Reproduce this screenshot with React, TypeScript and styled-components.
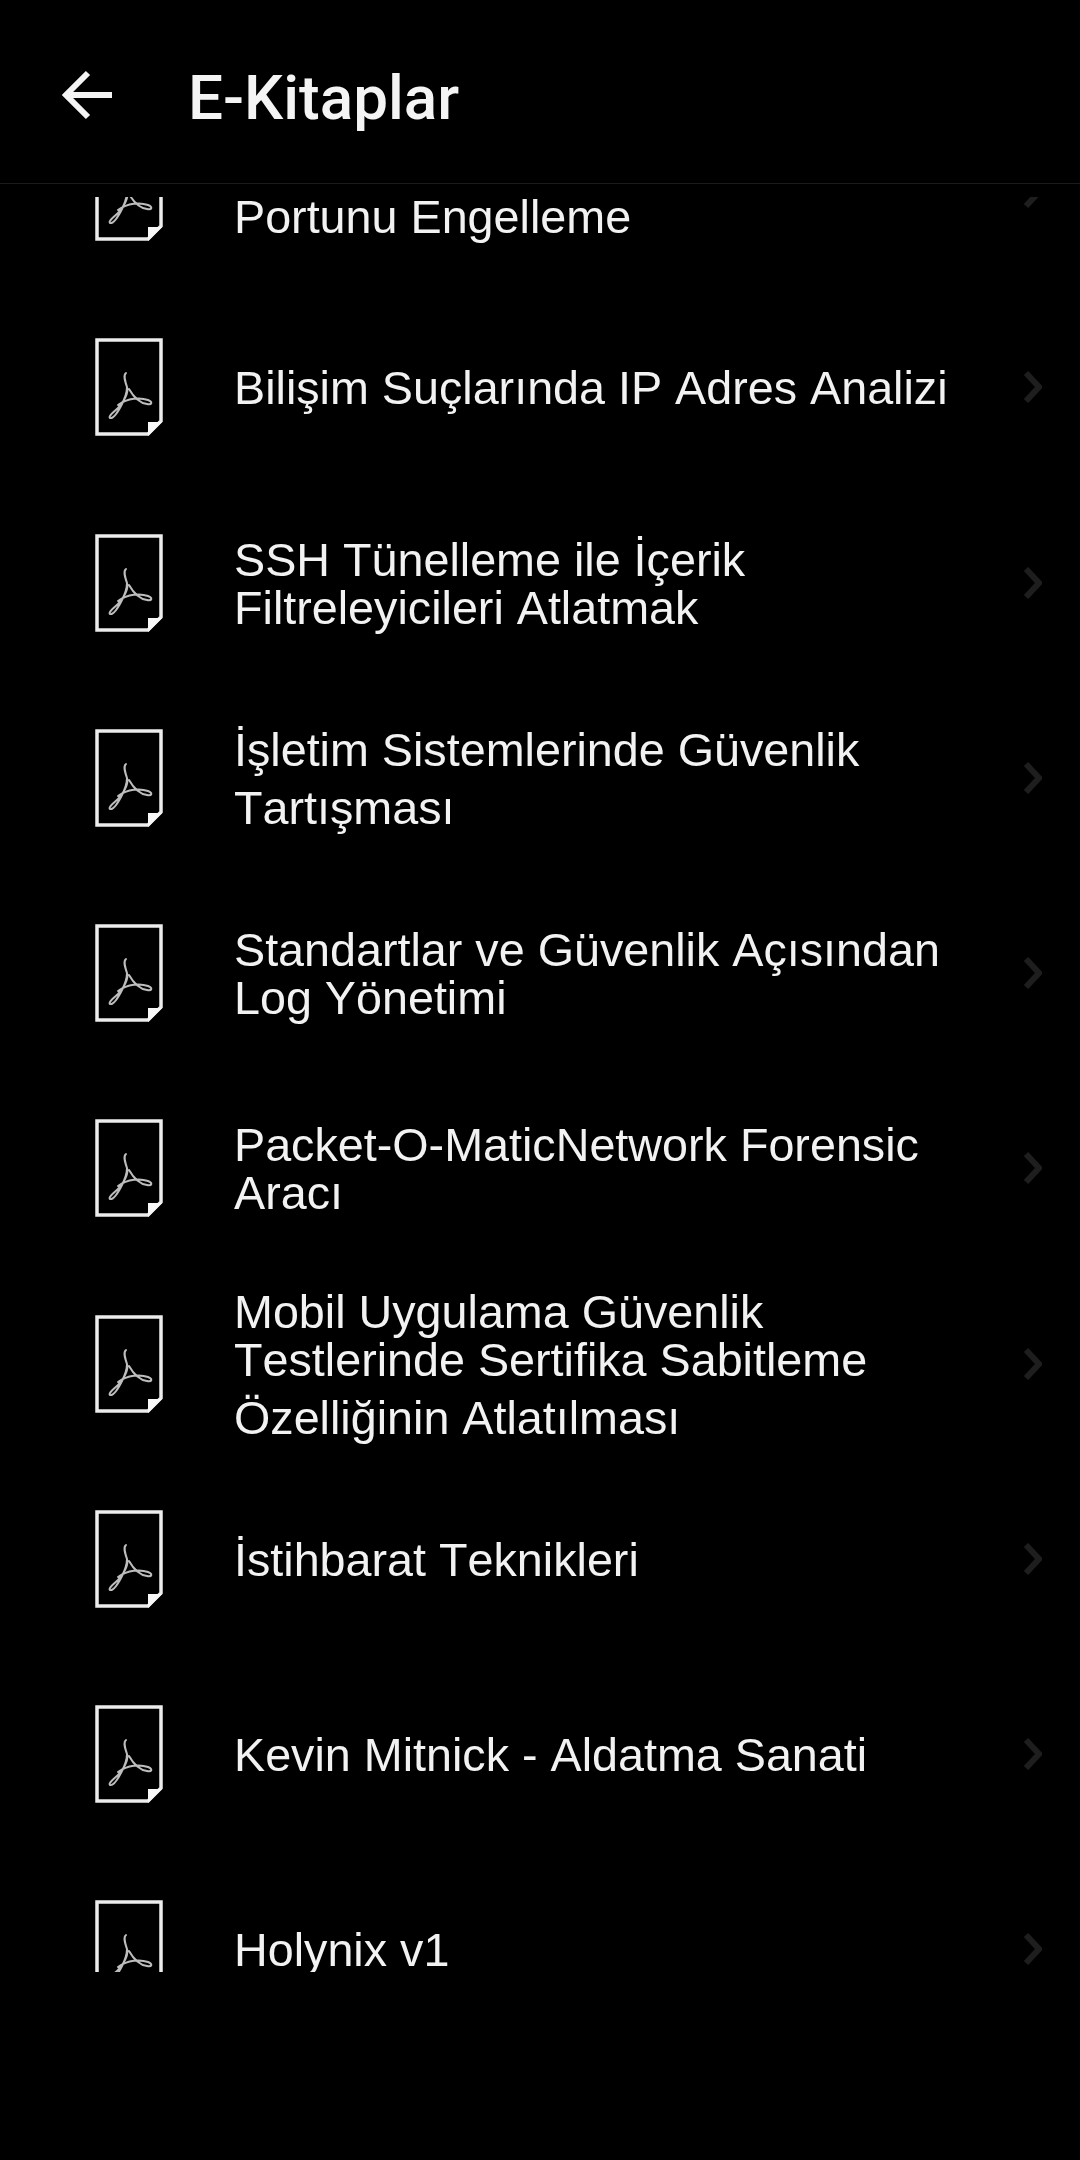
import React from "react";
import styled, { createGlobalStyle } from "styled-components";

const GlobalStyle = createGlobalStyle`
  html, body {
    margin: 0;
    padding: 0;
    background: #000;
  }
`;

const Screen = styled.div`
  width: 1080px;
  height: 2160px;
  background: #000;
  overflow: hidden;
  filter: blur(0.5px);
`;

const Header = styled.header`
  display: flex;
  align-items: center;
  height: 184px;
  padding: 7px 0 0 62px;
  gap: 76px;
  border-bottom: 1px solid #1b1b1b;
  box-sizing: border-box;
`;

const BackButton = styled.div`
  display: flex;
  width: 50px;
  height: 50px;
`;

const Title = styled.h1`
  margin: 6px 0 0;
  color: #f4f4f4;
  font-family: Roboto, "Liberation Sans", sans-serif;
  font-size: 62px;
  font-weight: 500;
  line-height: 1;
`;

const ListViewport = styled.div`
  margin-top: 13px;
  height: 1775px;
  overflow: hidden;
`;

const ScrolledList = styled.ul`
  list-style: none;
  margin: -102.6px 0 0;
  padding: 0;
`;

const Row = styled.li`
  display: grid;
  grid-template-columns: 68px 1fr 20px;
  align-items: center;
  column-gap: 71px;
  height: 195.25px;
  padding: 0 38px 0 95px;
  box-sizing: border-box;
`;

const PdfIcon = styled.svg`
  display: block;
  width: 68px;
  height: 98px;
`;

const RowText = styled.div`
  padding-top: 2px;
  color: #f2f2f2;
  font-family: "Liberation Sans", Arial, sans-serif;
  font-size: 46.7px;
  font-kerning: none;
  white-space: nowrap;
`;

const Line = styled.div<{ $gap?: number }>`
  line-height: 48px;
  margin-top: ${(props) => props.$gap || 0}px;
`;

const Chevron = styled.svg`
  display: block;
  width: 20px;
  height: 32px;
`;

type Item = { lines: string[]; gaps?: number[] };

// first item is scrolled half under the header, its upper line is out of view
const items: Item[] = [
  { lines: ["Portunu Engelleme"], gaps: [48] },
  { lines: ["Bilişim Suçlarında IP Adres Analizi"] },
  { lines: ["SSH Tünelleme ile İçerik", "Filtreleyicileri Atlatmak"] },
  { lines: ["İşletim Sistemlerinde Güvenlik", "Tartışması"], gaps: [0, 10] },
  { lines: ["Standartlar ve Güvenlik Açısından", "Log Yönetimi"] },
  { lines: ["Packet-O-MaticNetwork Forensic", "Aracı"] },
  {
    lines: [
      "Mobil Uygulama Güvenlik",
      "Testlerinde Sertifika Sabitleme",
      "Özelliğinin Atlatılması",
    ],
    gaps: [0, 0, 10],
  },
  { lines: ["İstihbarat Teknikleri"] },
  { lines: ["Kevin Mitnick - Aldatma Sanati"] },
  { lines: ["Holynix v1"] },
];

const FileIcon = () => (
  <PdfIcon viewBox="0 0 68 98" fill="none">
    <path d="M2 2H66V83L53 96H2Z" stroke="#ececec" strokeWidth="3.5" />
    <path d="M67 84L53 98V84Z" fill="#f8f8f8" />
    <path
      d="M31 35C28 37 30 43 32 49C34 55 28 65 23 70C19 74 13 78 15 80C18 81 23 74 27 66C30 60 32 55 32 49M23 67C33 60 45 59 53 62C58 64 57 67 52 66C44 65 38 58 34 51"
      stroke="#bdbdbd"
      strokeWidth="2"
      strokeLinecap="round"
    />
  </PdfIcon>
);

const App: React.FC = () => (
  <Screen>
    <GlobalStyle />
    <Header>
      <BackButton>
        <svg width="50" height="50" viewBox="0 0 50 50" fill="none">
          <path
            d="M50 25H4M26 3L4 25L26 47"
            stroke="#f4f4f4"
            strokeWidth="6"
          />
        </svg>
      </BackButton>
      <Title>E-Kitaplar</Title>
    </Header>
    <ListViewport>
      <ScrolledList>
        {items.map((item) => (
          <Row key={item.lines.join(" ")}>
            <FileIcon />
            <RowText>
              {item.lines.map((line, i) => (
                <Line key={line} $gap={item.gaps?.[i]}>
                  {line}
                </Line>
              ))}
            </RowText>
            <Chevron viewBox="0 0 20 32" fill="none">
              <path d="M4 2L17 16L4 30" stroke="#1e1e1e" strokeWidth="6" />
            </Chevron>
          </Row>
        ))}
      </ScrolledList>
    </ListViewport>
  </Screen>
);

export default App;
